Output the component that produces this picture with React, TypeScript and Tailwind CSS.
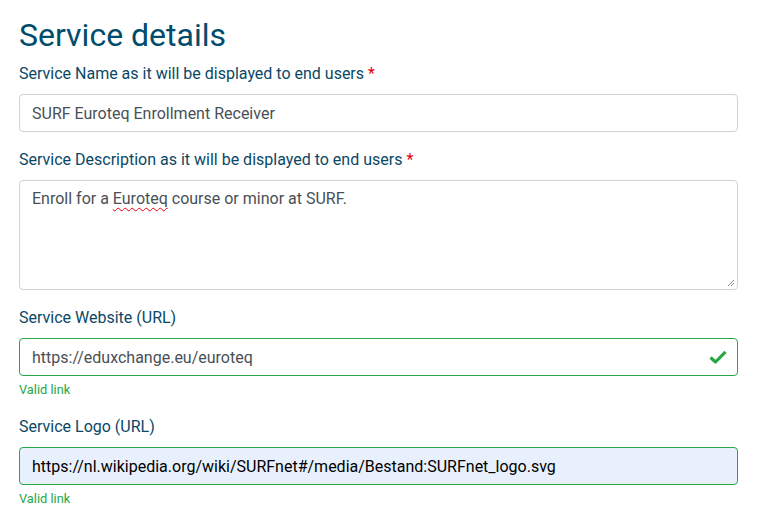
import React from 'react';

const font = { fontFamily: 'Roboto, "Liberation Sans", sans-serif' };

function Label({ children, required }: { children: React.ReactNode; required?: boolean }) {
    return (
        <label className="block text-[16px] leading-6 text-[#0a4866] mb-2">
            {children}
            {required && <span className="text-[#e3000b] ml-1">*</span>}
        </label>
    );
}

function CheckIcon() {
    return (
        <svg width="18" height="14" viewBox="0 0 18 14" className="absolute right-[11px] top-1/2 -translate-y-1/2">
            <path d="M1.5 7.5 L6.5 12 L16.5 1.8" fill="none" stroke="#28a745" strokeWidth="3.2" strokeLinejoin="round" />
        </svg>
    );
}

export default function App() {
    return (
        <div className="w-[759px] h-[527px] overflow-hidden bg-white pl-[19px] pr-[21px]" style={font}>
            <h2 className="text-[32px] leading-[38px] text-[#004c6d] pt-[16px] mb-[8px]">Service details</h2>

            {/* Service name */}
            <div className="mb-4">
                <Label required>Service Name as it will be displayed to end users</Label>
                <input
                    readOnly
                    value="SURF Euroteq Enrollment Receiver"
                    className="block w-full h-[38px] px-3 border border-[#ced4da] rounded text-[16px] text-[#495057] outline-none"
                    style={font}
                />
            </div>

            {/* Description */}
            <div className="mb-4">
                <Label required>Service Description as it will be displayed to end users</Label>
                <div className="relative h-[110px] w-full border border-[#ced4da] rounded px-3 pt-[6px] text-[16px] leading-6 text-[#495057]">
                    Enroll for a{' '}
                    <span className="underline decoration-wavy decoration-[#e3000b] decoration-1 underline-offset-[3px]">Euroteq</span>{' '}
                    course or minor at SURF.
                    <svg width="8" height="8" viewBox="0 0 8 8" className="absolute right-[2px] bottom-[2px]">
                        <path d="M1 7 L7 1 M4 7 L7 4" stroke="#888" strokeWidth="1" />
                    </svg>
                </div>
            </div>

            {/* Website */}
            <div className="mb-[15px]">
                <Label>Service Website (URL)</Label>
                <div className="relative">
                    <input
                        readOnly
                        value="https://eduxchange.eu/euroteq"
                        className="block w-full h-[38px] px-3 pr-10 border border-[#28a745] rounded text-[16px] text-[#495057] outline-none"
                        style={font}
                    />
                    <CheckIcon />
                </div>
                <div className="text-[12.8px] leading-5 text-[#28a745] mt-1">Valid link</div>
            </div>

            {/* Logo */}
            <div>
                <Label>Service Logo (URL)</Label>
                <input
                    readOnly
                    value="https://nl.wikipedia.org/wiki/SURFnet#/media/Bestand:SURFnet_logo.svg"
                    className="block w-full h-[38px] px-3 border border-[#28a745] rounded text-[16px] text-black bg-[#e8f0fe] outline-none"
                    style={font}
                />
                <div className="text-[12.8px] leading-5 text-[#28a745] mt-1">Valid link</div>
            </div>
        </div>
    );
}
